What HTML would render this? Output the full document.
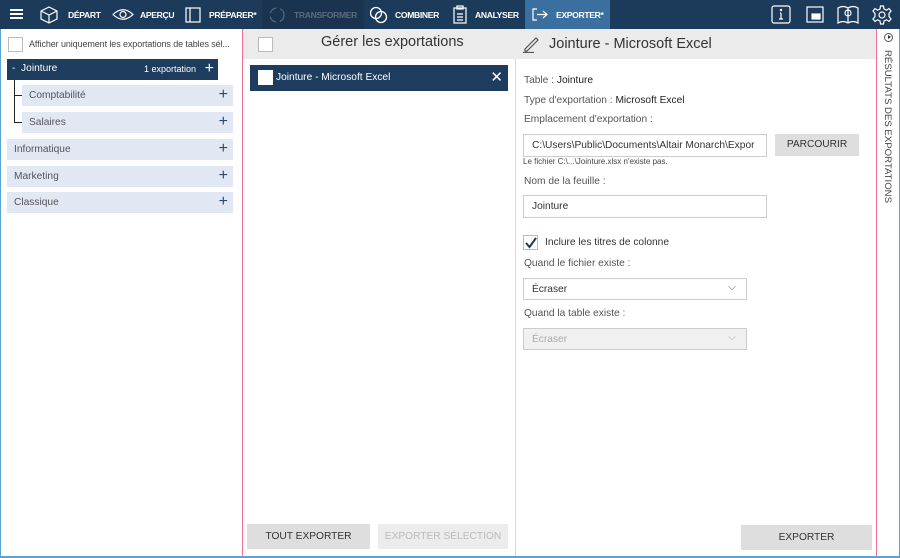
<!DOCTYPE html><html><head><meta charset="utf-8"><style>
*{box-sizing:border-box;margin:0;padding:0}
body{width:900px;height:558px;overflow:hidden;background:#fff;font-family:"Liberation Sans",sans-serif;font-size:11px;color:#333;position:relative}
.a{position:absolute}
.top{left:0;top:0;width:900px;height:29px;background:#1c3a5a}
.nav{color:#fff;font-weight:bold;font-size:8.6px;top:10px;letter-spacing:-.35px}
.row{background:#e1e8f3;height:21px;color:#555;font-size:10.2px;padding:5px 0 0 7px}
.plus{position:absolute;right:5px;top:1px;font-size:16px;color:#2a4a6a;font-weight:normal;line-height:17px}
.btn{background:#dedede;height:25px;text-align:center;font-size:10.2px;padding-top:7px;color:#333}
.lbl{font-size:10.2px;color:#555;left:524px}
.inp{border:1px solid #ccc;height:23px;font-size:10.2px;padding:5px 8px;color:#333;background:#fff;white-space:nowrap;overflow:hidden}
</style></head><body>
<div class="a top"></div>
<div class="a" style="left:10px;top:9px;width:13px;height:2px;background:#fff;box-shadow:0 4px 0 #fff,0 8px 0 #fff"></div>
<svg class="a" style="left:40px;top:6px" width="18" height="18" fill="none" stroke="#fff" stroke-width="1.2"><path d="M9 1L17 5V13L9 17L1 13V5Z M1 5L9 9L17 5 M9 9V17"/></svg>
<div class="a nav" style="left:68px">DÉPART</div>
<svg class="a" style="left:112px;top:8px" width="22" height="13" fill="none" stroke="#fff" stroke-width="1.2"><path d="M1 6.5Q11 -3 21 6.5Q11 16 1 6.5Z"/><circle cx="11" cy="6.5" r="3"/></svg>
<div class="a nav" style="left:140px">APERÇU</div>
<svg class="a" style="left:185px;top:7px" width="16" height="16" fill="none" stroke="#fff" stroke-width="1.2"><rect x="1" y="1" width="14" height="14"/><path d="M5 1V15"/></svg>
<div class="a nav" style="left:209px">PRÉPARER*</div>
<div class="a" style="left:262px;top:0;width:102px;height:29px;background:#1a3450"></div>
<svg class="a" style="left:268px;top:6px" width="18" height="18" fill="none" stroke="#5a6a7a" stroke-width="1.2"><circle cx="9" cy="9" r="7" stroke-dasharray="8 4"/></svg>
<div class="a nav" style="left:294px;color:#5b6b7e">TRANSFORMER</div>
<svg class="a" style="left:369px;top:6px" width="19" height="18" fill="none" stroke="#fff" stroke-width="1.3"><circle cx="7" cy="7" r="5.5"/><circle cx="12" cy="11" r="5.5"/></svg>
<div class="a nav" style="left:395px">COMBINER</div>
<svg class="a" style="left:453px;top:5px" width="14" height="19" fill="none" stroke="#fff" stroke-width="1.2"><rect x="1" y="3" width="12" height="15"/><rect x="4" y="1" width="6" height="3"/><path d="M4 9H10M4 12H10M4 15H10"/></svg>
<div class="a nav" style="left:475px">ANALYSER</div>
<div class="a" style="left:525px;top:0;width:85px;height:29px;background:#3a6f9f"></div>
<svg class="a" style="left:532px;top:8px" width="16" height="13" fill="none" stroke="#fff" stroke-width="1.2"><path d="M5 1H1V12H5M5 6.5H15M11 3L15 6.5L11 10"/></svg>
<div class="a nav" style="left:556px">EXPORTER*</div>
<svg class="a" style="left:771px;top:5px" width="20" height="19" fill="none" stroke="#fff" stroke-width="1.2"><rect x="1" y="1" width="18" height="17" rx="2"/><path d="M10 8V14M8 14H12M9 8H10"/><circle cx="10" cy="5" r=".6" fill="#fff"/></svg>
<svg class="a" style="left:806px;top:6px" width="18" height="17" fill="none" stroke="#fff" stroke-width="1.2"><rect x="1" y="1" width="16" height="15"/><rect x="6" y="8" width="8" height="5" fill="#fff"/></svg>
<svg class="a" style="left:837px;top:4px" width="22" height="21" fill="none" stroke="#fff" stroke-width="1.2"><path d="M1 4V19Q6 16 11 19Q16 16 21 19V4Q16 1 11 4Q6 1 1 4Z M11 4V19"/><circle cx="11" cy="9" r="3"/></svg>
<svg class="a" style="left:872px;top:5px" width="20" height="20" fill="none" stroke="#fff" stroke-width="1.2"><circle cx="10" cy="10" r="3"/><path d="M8.5 1H11.5L12 4L14.5 5.2L17 3.5L19 6L17 8.5V11.5L19 14L17 16.5L14.5 14.8L12 16L11.5 19H8.5L8 16L5.5 14.8L3 16.5L1 14L3 11.5V8.5L1 6L3 3.5L5.5 5.2L8 4Z"/></svg>

<div class="a" style="left:0;top:29px;width:1px;height:529px;background:#5ba3d3"></div>
<div class="a" style="left:899px;top:29px;width:1px;height:529px;background:#5ba3d3"></div>
<div class="a" style="left:0;top:556px;width:900px;height:2px;background:#5ba3d3"></div>
<div class="a" style="left:242px;top:29px;width:1px;height:527px;background:#f0708f"></div>
<div class="a" style="left:515px;top:29px;width:1px;height:527px;background:#d8d8d8"></div>
<div class="a" style="left:876px;top:29px;width:1px;height:527px;background:#f0708f"></div>

<div class="a" style="left:8px;top:37px;width:15px;height:15px;border:1px solid #bbb"></div>
<div class="a" style="left:29px;top:39px;font-size:9px;color:#444;letter-spacing:-.1px">Afficher uniquement les exportations de tables sél...</div>
<div class="a" style="left:7px;top:59px;width:211px;height:21px;background:#1d3c5e;color:#fff;font-size:10.2px;padding:4px 0 0 5px">-&nbsp;&nbsp;Jointure<span style="position:absolute;left:137px;top:5px;font-size:9px">1 exportation</span><span class="plus" style="color:#fff;right:4px">+</span></div>
<div class="a" style="left:14px;top:80px;width:1px;height:43px;background:#222"></div>
<div class="a" style="left:14px;top:95px;width:8px;height:1px;background:#222"></div>
<div class="a" style="left:14px;top:122px;width:8px;height:1px;background:#222"></div>
<div class="a row" style="left:22px;top:85px;width:211px">Comptabilité<span class="plus">+</span></div>
<div class="a row" style="left:22px;top:112px;width:211px">Salaires<span class="plus">+</span></div>
<div class="a row" style="left:7px;top:139px;width:226px">Informatique<span class="plus">+</span></div>
<div class="a row" style="left:7px;top:166px;width:226px">Marketing<span class="plus">+</span></div>
<div class="a row" style="left:7px;top:192px;width:226px">Classique<span class="plus">+</span></div>

<div class="a" style="left:243px;top:29px;width:633px;height:30px;background:#ebebeb"></div>
<div class="a" style="left:258px;top:37px;width:15px;height:15px;border:1px solid #bbb;background:#fff"></div>
<div class="a" style="left:321px;top:34px;font-size:14.5px;color:#333">Gérer les exportations</div>
<div class="a" style="left:250px;top:65px;width:258px;height:26px;background:#1d3c5e;color:#fff;font-size:10.2px;padding:7px 0 0 26px">Jointure - Microsoft Excel<span style="position:absolute;right:5px;top:3px;font-size:15px">✕</span></div>
<div class="a" style="left:258px;top:70px;width:15px;height:15px;background:#fff"></div>
<div class="a btn" style="left:247px;top:524px;width:123px">TOUT EXPORTER</div>
<div class="a btn" style="left:378px;top:524px;width:130px;background:#ececec;color:#bbb">EXPORTER SÉLECTION</div>

<svg class="a" style="left:522px;top:35px" width="18" height="18" fill="none" stroke="#555" stroke-width="1.2"><path d="M3 14L14 3L16 5L5 16H3Z M1 17.5H12"/></svg>
<div class="a" style="left:549px;top:36px;font-size:14.5px;color:#333">Jointure - Microsoft Excel</div>
<div class="a lbl" style="top:75px">Table : <span style="color:#222">Jointure</span></div>
<div class="a lbl" style="top:95px">Type d'exportation : <span style="color:#222">Microsoft Excel</span></div>
<div class="a lbl" style="top:114px">Emplacement d'exportation :</div>
<div class="a inp" style="left:523px;top:134px;width:244px">C:\Users\Public\Documents\Altair Monarch\Expor</div>
<div class="a btn" style="left:775px;top:134px;width:84px;height:22px;padding-top:5px">PARCOURIR</div>
<div class="a" style="left:523px;top:157px;font-size:8px;color:#444">Le fichier C:\...\Jointure.xlsx n'existe pas.</div>
<div class="a lbl" style="top:176px">Nom de la feuille :</div>
<div class="a inp" style="left:523px;top:195px;width:244px">Jointure</div>
<div class="a" style="left:523px;top:235px;width:15px;height:15px;border:1px solid #bbb"></div>
<svg class="a" style="left:525px;top:237px" width="12" height="12" fill="none" stroke="#1d3c5e" stroke-width="2"><path d="M1 6L4.5 10L11 1"/></svg>
<div class="a lbl" style="left:545px;top:237px;color:#333">Inclure les titres de colonne</div>
<div class="a lbl" style="top:258px">Quand le fichier existe :</div>
<div class="a inp" style="left:523px;top:278px;width:224px;height:22px">Écraser<span style="position:absolute;right:10px;top:3px;color:#555">⌵</span></div>
<div class="a lbl" style="top:308px">Quand la table existe :</div>
<div class="a inp" style="left:523px;top:328px;width:224px;height:22px;background:#f0f0f0;color:#aaa">Écraser<span style="position:absolute;right:10px;top:3px">⌵</span></div>
<div class="a btn" style="left:741px;top:525px;width:131px">EXPORTER</div>

<div class="a" style="left:884px;top:33px;width:9px;height:9px;border:1px solid #555;border-radius:50%"></div>
<div class="a" style="left:888px;top:35px;width:0;height:0;border-left:3px solid #333;border-top:2.5px solid transparent;border-bottom:2.5px solid transparent"></div>
<div class="a" style="left:882px;top:50px;writing-mode:vertical-rl;font-size:9.6px;color:#444">RÉSULTATS DES EXPORTATIONS</div>
</body></html>
